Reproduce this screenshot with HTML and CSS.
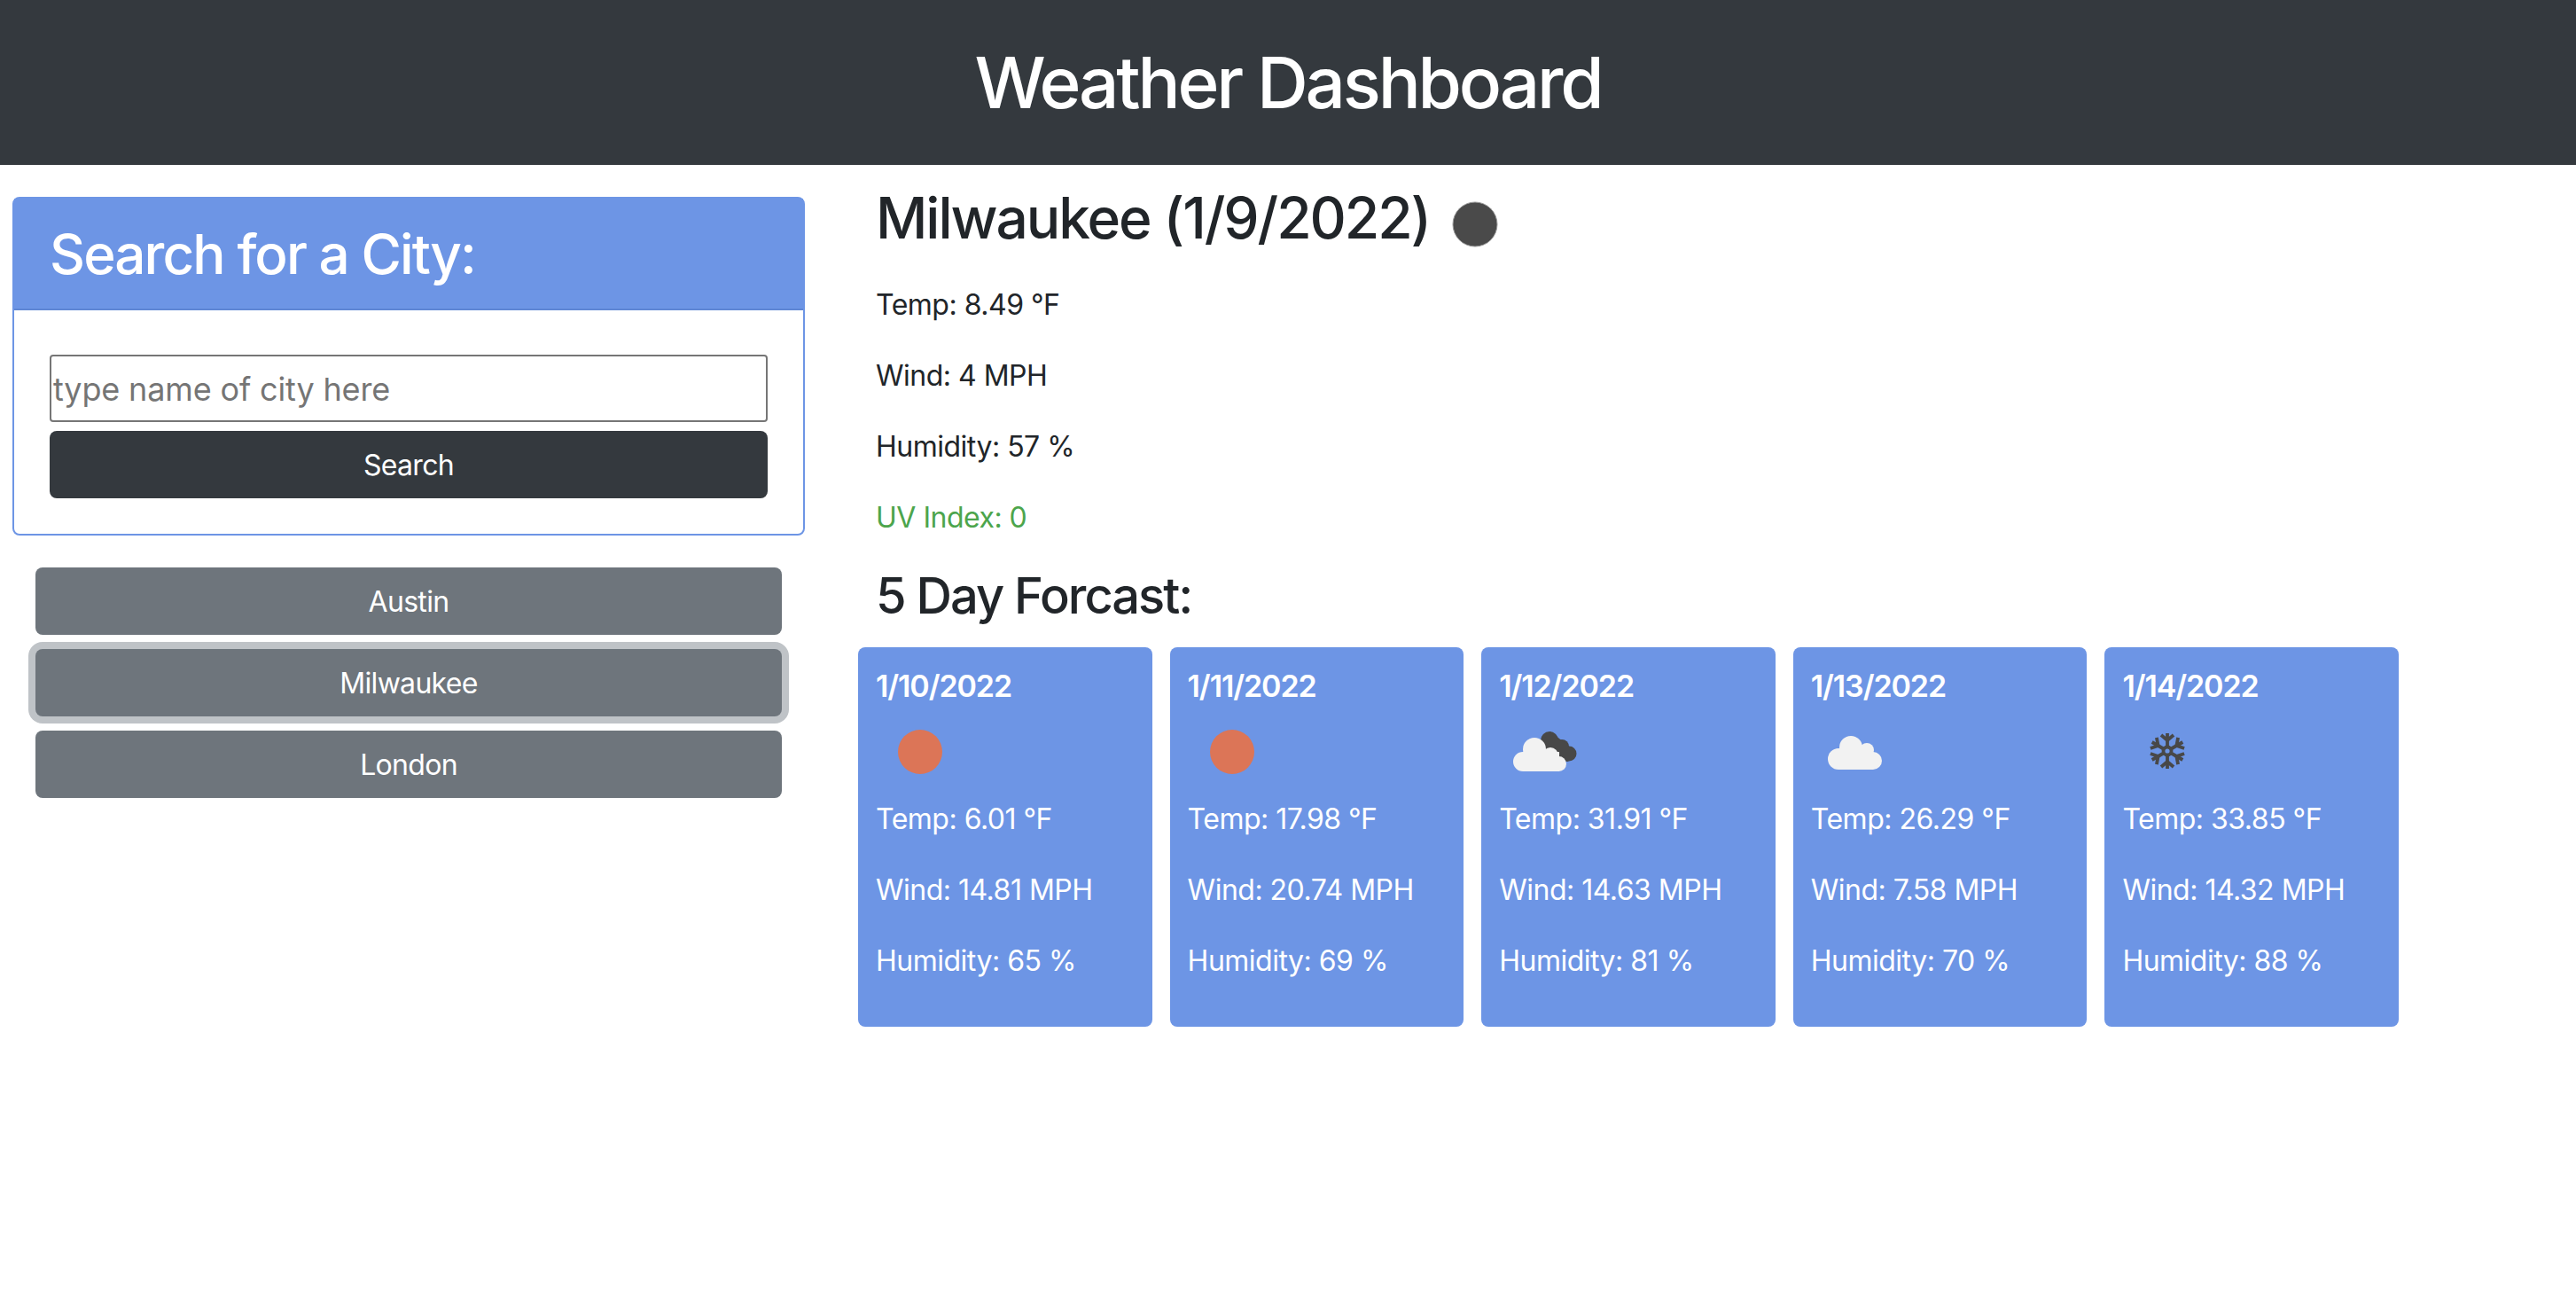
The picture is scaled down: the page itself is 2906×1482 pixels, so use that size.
FILE: index.html
```html
<!DOCTYPE html>
<html lang="en">
<head>
    <meta charset="UTF-8">
    <meta name="viewport" content="width=device-width, initial-scale=1.0">
    <title>Weather Dashboard</title>
    <link rel="stylesheet" href="styles.css">
</head>
<body>
    <header class="topBar">
        <h1>Weather Dashboard</h1>
    </header>

    <main class="layout">
        <aside class="sidebar">
            <div class="searchCard">
                <h2 class="searchTitle">Search for a City:</h2>
                <div class="searchBody">
                    <input class="cityInput" type="text" placeholder="type name of city here">
                    <button class="btn btnDark">Search</button>
                </div>
            </div>
            <div class="history">
                <button class="btn btnGrey">Austin</button>
                <button class="btn btnGrey btnFocus">Milwaukee</button>
                <button class="btn btnGrey">London</button>
            </div>
        </aside>

        <section class="content">
            <div class="today">
                <div class="todayTitle">
                    <h2>Milwaukee (1/9/2022)</h2>
                    <svg class="todayIcon" viewBox="0 0 56 56"><circle cx="28" cy="28" r="25" fill="#4a4a4a" stroke="#9a9a9a" stroke-width="1"/></svg>
                </div>
                <p>Temp: 8.49 °F</p>
                <p>Wind: 4 MPH</p>
                <p>Humidity: 57 %</p>
                <p class="uvLow">UV Index: 0</p>
                <h3>5 Day Forcast:</h3>
            </div>

            <div class="forecast">
                <div class="dayCard">
                    <h6>1/10/2022</h6>
                    <svg class="dayIcon" viewBox="0 0 100 100"><circle cx="50" cy="50" r="25" fill="#dc7557"/></svg>
                    <p>Temp: 6.01 °F</p>
                    <p>Wind: 14.81 MPH</p>
                    <p>Humidity: 65 %</p>
                </div>
                <div class="dayCard">
                    <h6>1/11/2022</h6>
                    <svg class="dayIcon" viewBox="0 0 100 100"><circle cx="50" cy="50" r="25" fill="#dc7557"/></svg>
                    <p>Temp: 17.98 °F</p>
                    <p>Wind: 20.74 MPH</p>
                    <p>Humidity: 69 %</p>
                </div>
                <div class="dayCard">
                    <h6>1/12/2022</h6>
                    <svg class="dayIcon" viewBox="0 0 100 100">
                        <g fill="#484848">
                            <circle cx="57" cy="37" r="10"/>
                            <circle cx="71" cy="44" r="8"/>
                            <circle cx="79" cy="52" r="8.5"/>
                            <path d="M48 39L58 27L87 50L78 61L60 60Z"/>
                        </g>
                        <g fill="#f2f2f2">
                            <circle cx="40" cy="47" r="13"/>
                            <circle cx="58" cy="54" r="9"/>
                            <circle cx="67.5" cy="63.5" r="8.5"/>
                            <circle cx="27" cy="61" r="11"/>
                            <rect x="27" y="50" width="41" height="22"/>
                        </g>
                    </svg>
                    <p>Temp: 31.91 °F</p>
                    <p>Wind: 14.63 MPH</p>
                    <p>Humidity: 81 %</p>
                </div>
                <div class="dayCard">
                    <h6>1/13/2022</h6>
                    <svg class="dayIcon" viewBox="0 0 100 100">
                        <g fill="#f2f2f2">
                            <circle cx="45" cy="45" r="13"/>
                            <circle cx="63" cy="48" r="8"/>
                            <circle cx="70" cy="60" r="10"/>
                            <circle cx="31" cy="58" r="12"/>
                            <rect x="31" y="47" width="39" height="23"/>
                        </g>
                    </svg>
                    <p>Temp: 26.29 °F</p>
                    <p>Wind: 7.58 MPH</p>
                    <p>Humidity: 70 %</p>
                </div>
                <div class="dayCard">
                    <h6>1/14/2022</h6>
                    <svg class="dayIcon" viewBox="0 0 100 100">
                        <g fill="none" stroke="#484848" stroke-width="3.8">
                            <g id="flakeArm">
                                <path d="M51 44V29"/>
                                <path d="M44 31L51 37L58 31"/>
                            </g>
                            <use href="#flakeArm" transform="rotate(60 51 49)"/>
                            <use href="#flakeArm" transform="rotate(120 51 49)"/>
                            <use href="#flakeArm" transform="rotate(180 51 49)"/>
                            <use href="#flakeArm" transform="rotate(240 51 49)"/>
                            <use href="#flakeArm" transform="rotate(300 51 49)"/>
                            <circle cx="51" cy="49" r="4.5"/>
                        </g>
                    </svg>
                    <p>Temp: 33.85 °F</p>
                    <p>Wind: 14.32 MPH</p>
                    <p>Humidity: 88 %</p>
                </div>
            </div>
        </section>
    </main>
</body>
</html>
```

FILE: styles.css
```css
* {
    box-sizing: border-box;
}

body {
    margin: 0;
    font-family: Inter, 'Liberation Sans', sans-serif;
    font-size: 32px;
    line-height: 48px;
    letter-spacing: -0.5px;
    color: #212529;
    background-color: white;
}

h1, h2, h3, h6, p {
    margin: 0;
}

.topBar {
    height: 186px;
    display: flex;
    align-items: center;
    justify-content: center;
    background-color: #34393e;
    color: white;
}

.topBar h1 {
    font-size: 80px;
    font-weight: 500;
    line-height: 96px;
    letter-spacing: -3.2px;
}

.layout {
    display: flex;
    padding-top: 36px;
}

.sidebar {
    width: 922px;
    padding-left: 14px;
    flex-shrink: 0;
}

.searchCard {
    width: 894px;
    height: 382px;
    border: 2px solid #6d95e5;
    border-radius: 8px;
}

.searchTitle {
    height: 126px;
    padding: 2px 0 0 40px;
    display: flex;
    align-items: center;
    background-color: #6d95e5;
    border-bottom: 2px solid #5f86d4;
    color: white;
    font-size: 62px;
    font-weight: 500;
    letter-spacing: -1.9px;
}

.searchBody {
    padding: 50px 40px 0;
    display: flex;
    flex-direction: column;
    gap: 10px;
}

.cityInput {
    height: 76px;
    width: 100%;
    padding: 2px 2px 0;
    border: 2px solid #767676;
    border-radius: 4px;
    font-family: inherit;
    font-size: 36px;
    letter-spacing: -0.15px;
}

.cityInput::placeholder {
    color: #757575;
}

.btn {
    height: 76px;
    width: 100%;
    border: none;
    border-radius: 8px;
    color: white;
    font-family: inherit;
    font-size: 32px;
    letter-spacing: -0.7px;
}

.btnDark {
    background-color: #34393e;
}

.btnGrey {
    background-color: #6e757c;
}

.btnFocus {
    box-shadow: 0 0 0 8px #bfc3c7;
}

.history {
    width: 842px;
    margin: 36px 0 0 26px;
    display: flex;
    flex-direction: column;
    gap: 16px;
}

.content {
    padding-left: 46px;
}

.today {
    padding-left: 20px;
}

.todayTitle {
    display: flex;
    align-items: flex-start;
    height: 66px;
}

.todayTitle h2 {
    font-size: 64px;
    font-weight: 500;
    line-height: 48px;
    letter-spacing: -2.05px;
}

.todayIcon {
    width: 56px;
    height: 56px;
    margin: 3px 0 0 23px;
}

.today p {
    margin-top: 32px;
}

.uvLow {
    color: #4ca54c;
}

.today h3 {
    margin-top: 32px;
    font-size: 56px;
    font-weight: 500;
    line-height: 64px;
    letter-spacing: -2px;
}

.forecast {
    display: flex;
    gap: 20px;
    margin-top: 26px;
}

.dayCard {
    width: 331.6px;
    height: 428px;
    padding: 20px 20px;
    border-radius: 8px;
    background-color: #6d95e5;
    color: white;
}

.dayCard h6 {
    font-size: 34px;
    font-weight: 600;
    line-height: 48px;
    letter-spacing: -1.1px;
}

.dayIcon {
    display: block;
    width: 100px;
    height: 100px;
    overflow: visible;
}

.dayCard p {
    margin-top: 2px;
}

.dayCard p + p {
    margin-top: 32px;
}
```
